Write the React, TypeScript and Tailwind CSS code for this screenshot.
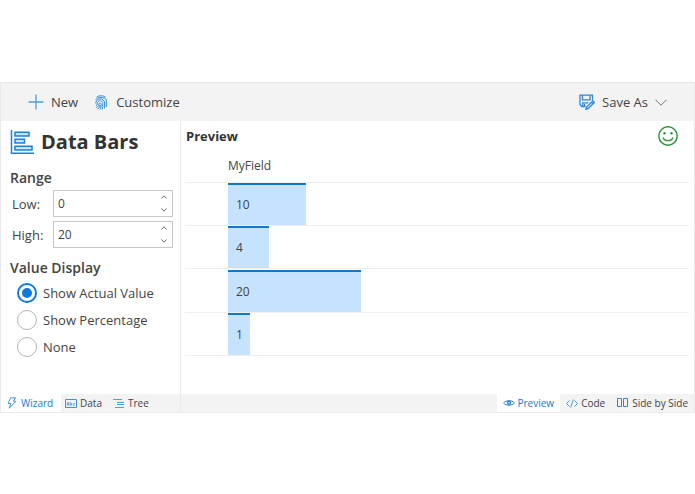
import React, { useState } from 'react';

const rows = [
  { value: 10, width: 78 },
  { value: 4, width: 41 },
  { value: 20, width: 133 },
  { value: 1, width: 22 },
];

const displayModes = ['Show Actual Value', 'Show Percentage', 'None'];

interface IconProps {
  className?: string;
}

function PlusIcon({ className }: IconProps) {
  return (
    <svg viewBox="0 0 16 16" className={className} fill="none" stroke="#4f9ddb" strokeWidth="1.3">
      <path d="M8 .5v15M.5 8h15" />
    </svg>
  );
}

function FingerprintIcon({ className }: IconProps) {
  return (
    <svg viewBox="0 0 12 15" className={className} fill="none" stroke="#2f8ad6" strokeWidth="1">
      <path d="M1.500 2.200C3.500.3 8.500.3 10.500 2.200" />
      <path d="M.7 5C2 1.600 10 1.600 11.300 5v7" />
      <path d="M.8 8.500C.8 2.400 9.600 2.600 9.600 8v5.500" />
      <path d="M.8 10.800C3.200 10.200 1.800 7.600 3 6.600c1.800-1.700 4.800-.6 4.800 1.800 0 2.200 0 4-.6 6" />
      <path d="M1.300 12.600C4.600 11.600 3.400 9.200 4.400 8.200c.8-.6 1.700 0 1.700 1 0 2-.2 3.800-1 5.300" />
      <path d="M2.500 14C4 13.400 4.700 12 4.800 10" />
    </svg>
  );
}

function SaveAsIcon({ className }: IconProps) {
  return (
    <svg viewBox="0 0 16 16" className={className} fill="none" stroke="#2f86d2" strokeWidth="1.3">
      <path d="M6.500 12.500H2.800L1 10.800V1.200h12.500v5M3.500 1.200v4.600h7.500V1.200M3.800 12.500V8.800h5.700M5.600 10v2.500" />
      <path d="M13.800 6.800l1.600 1.600-6 6-2.600 1 1-2.600zM12.500 8.200l1.500 1.500" fill="#d5ebfc" />
    </svg>
  );
}

function ChevronIcon({ className }: IconProps) {
  return (
    <svg viewBox="0 0 12 7" className={className} fill="none" stroke="#777" strokeWidth="1">
      <path d="M.5.7L6 6.200 11.500.7" />
    </svg>
  );
}

function SpinIcon({ className }: IconProps) {
  return (
    <svg viewBox="0 0 6 4" className={className} fill="none" stroke="#666" strokeWidth="1">
      <path d="M.3.5L3 3.200 5.700.5" />
    </svg>
  );
}

function SmileIcon({ className }: IconProps) {
  return (
    <svg viewBox="0 0 20 20" className={className} fill="none" stroke="#2d9436" strokeWidth="1.400">
      <circle cx="10" cy="10" r="9.200" />
      <path d="M5 11.500c1.500 4.200 8.500 4.200 10 0" />
      <circle cx="6.500" cy="7.200" r="1.200" fill="#2d9436" stroke="none" />
      <circle cx="13.500" cy="7.200" r="1.200" fill="#2d9436" stroke="none" />
    </svg>
  );
}

function DataBarsIcon({ className }: IconProps) {
  return (
    <svg viewBox="0 0 24 24" className={className} fill="none" stroke="#1683d8" strokeWidth="1.500">
      <path d="M1.500 0v23.200H24" />
      <path d="M5 2.300h14v3.700H5zM5 9.300h9.500v3.700H5zM5 16.300h17v3.700H5z" fill="#c5e3ff" />
    </svg>
  );
}

function BoltIcon({ className }: IconProps) {
  return (
    <svg viewBox="0 0 10 12" className={className} fill="none" stroke="#2f86d2" strokeWidth="0.900">
      <path d="M3.600.8h5L6.300 4.300h2.600L2.200 11.200l1.700-4.700H1.200z" />
    </svg>
  );
}

function DataIcon({ className }: IconProps) {
  return (
    <svg viewBox="0 0 12 9" className={className} fill="none" stroke="#3e92d8">
      <path d="M.5.5h11v8H.5z" />
      <path d="M2 6.500l1-3.500 1 3.500M2.300 5.500h1.500M5.200 2.800v3.500h1.300V4.500H5.200M9.800 4.500H8.300v1.800h1.500" strokeWidth="0.700" />
    </svg>
  );
}

function TreeIcon({ className }: IconProps) {
  return (
    <svg viewBox="0 0 12 9" className={className} fill="none" stroke="#3e92d8">
      <path d="M0 .5h9M4 3.500h7M4 5.500h7M2 8.500h9" strokeWidth="0.900" />
    </svg>
  );
}

function EyeIcon({ className }: IconProps) {
  return (
    <svg viewBox="0 0 12 8" className={className} fill="none" stroke="#2f86d2">
      <path d="M.6 4C3 .9 9 .9 11.400 4 9 7 3 7 .6 4z" />
      <circle cx="6" cy="3.800" r="1.500" strokeWidth="1.400" />
    </svg>
  );
}

function CodeIcon({ className }: IconProps) {
  return (
    <svg viewBox="0 0 12 9" className={className} fill="none" stroke="#3e92d8" strokeWidth="0.900">
      <path d="M3.500 1.500l-3 3 3 3M8.500 1.500l3 3-3 3M7.300.5L4.700 8.500" />
    </svg>
  );
}

function SideBySideIcon({ className }: IconProps) {
  return (
    <svg viewBox="0 0 11 10" className={className} fill="none" stroke="#2f86d2">
      <path d="M.5.500h4v8h-4zM6.500.500h4v8h-4z" />
    </svg>
  );
}

interface NumberFieldProps {
  id: string;
  label: string;
  value: number;
  onChange: (value: number) => void;
}

function NumberField({ id, label, value, onChange }: NumberFieldProps) {
  return (
    <div className="flex items-center">
      <label htmlFor={id} className="w-[43px] pl-[2px]">{label}</label>
      <div className="flex h-[27px] flex-1 border border-[#c8c8c8] bg-white">
        <input
          id={id}
          type="text"
          inputMode="numeric"
          value={value}
          onChange={(e) => onChange(Number(e.target.value) || 0)}
          className="w-0 flex-1 px-1 text-[12px] outline-none"
        />
        <div className="flex w-[11px] flex-col justify-around">
          <button type="button" aria-label={`Increase ${id}`} onClick={() => onChange(value + 1)}>
            <SpinIcon className="h-1 w-[6px] rotate-180" />
          </button>
          <button type="button" aria-label={`Decrease ${id}`} onClick={() => onChange(value - 1)}>
            <SpinIcon className="h-1 w-[6px]" />
          </button>
        </div>
      </div>
    </div>
  );
}

export default function App() {
  const [low, setLow] = useState(0);
  const [high, setHigh] = useState(20);
  const [mode, setMode] = useState(displayModes[0]);

  return (
    <div className="min-h-screen bg-white pt-[82px] font-['Open_Sans',sans-serif] text-[13px] leading-5 text-[#444]">
      <div className="border border-[#e9e9e9]">
        <header className="flex h-[38px] items-center bg-[#f3f3f3] px-[27px]">
          <button type="button" className="flex items-center gap-[7px]">
            <PlusIcon className="h-4 w-4" />
            New
          </button>
          <button type="button" className="ml-[17px] flex items-center gap-[9px]">
            <FingerprintIcon className="h-[15px] w-3" />
            Customize
          </button>
          <button type="button" className="ml-auto flex items-center gap-[7px]">
            <SaveAsIcon className="h-4 w-4" />
            Save As
            <ChevronIcon className="h-[7px] w-3" />
          </button>
        </header>

        <div className="flex">
          <aside className="flex w-[180px] shrink-0 flex-col border-r border-[#e9e9e9]">
            <div className="flex-1 pt-[9px] pr-[7px] pl-[9px]">
              <h1 className="flex items-center gap-[7px] text-[20px] leading-6 font-bold text-[#333]">
                <DataBarsIcon className="h-6 w-6" />
                Data Bars
              </h1>

              <h2 className="mt-3 text-[14px] leading-6 font-semibold">Range</h2>
              <div className="flex flex-col gap-1">
                <NumberField id="low" label="Low:" value={low} onChange={setLow} />
                <NumberField id="high" label="High:" value={high} onChange={setHigh} />
              </div>

              <fieldset className="mt-[9px]">
                <legend className="text-[14px] leading-[22px] font-semibold">Value Display</legend>
                {displayModes.map((name) => (
                  <label key={name} className="flex h-[27px] items-center gap-[6px] pl-[7px]">
                    <input
                      type="radio"
                      name="display"
                      checked={mode === name}
                      onChange={() => setMode(name)}
                      className="h-5 w-5 appearance-none rounded-full border border-[#b5b5b5] bg-clip-content p-[3px] checked:border-2 checked:border-[#0f7bd6] checked:bg-[#0f7bd6]"
                    />
                    {name}
                  </label>
                ))}
              </fieldset>
            </div>

            <nav className="flex h-[18px] bg-[#f3f3f3] text-[10px] leading-[18px]">
              <button type="button" className="flex w-[60px] items-center gap-1 bg-white pl-[6px] text-[#2179c5]">
                <BoltIcon className="h-3 w-[10px]" />
                Wizard
              </button>
              <button type="button" className="flex w-12 items-center gap-[3px] pl-1">
                <DataIcon className="h-[9px] w-3" />
                Data
              </button>
              <button type="button" className="flex items-center gap-[3px] pl-1">
                <TreeIcon className="h-[9px] w-3" />
                Tree
              </button>
            </nav>
          </aside>

          <main className="flex min-w-0 flex-1 flex-col">
            <div className="h-[273px] pr-[5px] pl-[4px]">
              <div className="flex h-[29px] items-center justify-between pr-[11px] pl-px">
                <h2 className="font-bold text-[#333]">Preview</h2>
                <SmileIcon className="h-5 w-5" />
              </div>
              <table className="h-[206px] w-full border-collapse text-left text-[12px]">
                <thead className="h-8">
                  <tr className="h-8 border-b border-[#eee]">
                    <th className="h-8 py-0 pl-[43px] font-normal">MyField</th>
                  </tr>
                </thead>
                <tbody>
                  {rows.map((row) => (
                    <tr key={row.value} className="border-b border-[#eee]">
                      <td className="p-0 pl-[43px] align-bottom">
                        <div
                          className="flex h-[42px] items-center border-t-2 border-[#1177c8] bg-[#c5e3ff] pl-2"
                          style={{ width: row.width }}
                        >
                          {row.value}
                        </div>
                      </td>
                    </tr>
                  ))}
                </tbody>
              </table>
            </div>

            <nav className="flex h-[18px] justify-end bg-[#f3f3f3] pr-[6px] text-[10px] leading-[18px]">
              <button type="button" className="flex items-center gap-[3px] bg-white px-[6px] text-[#2179c5]">
                <EyeIcon className="h-2 w-3" />
                Preview
              </button>
              <button type="button" className="flex items-center gap-[3px] px-[6px]">
                <CodeIcon className="h-[9px] w-3" />
                Code
              </button>
              <button type="button" className="flex items-center gap-1 pl-[6px]">
                <SideBySideIcon className="h-[10px] w-[11px]" />
                Side by Side
              </button>
            </nav>
          </main>
        </div>
      </div>
    </div>
  );
}
